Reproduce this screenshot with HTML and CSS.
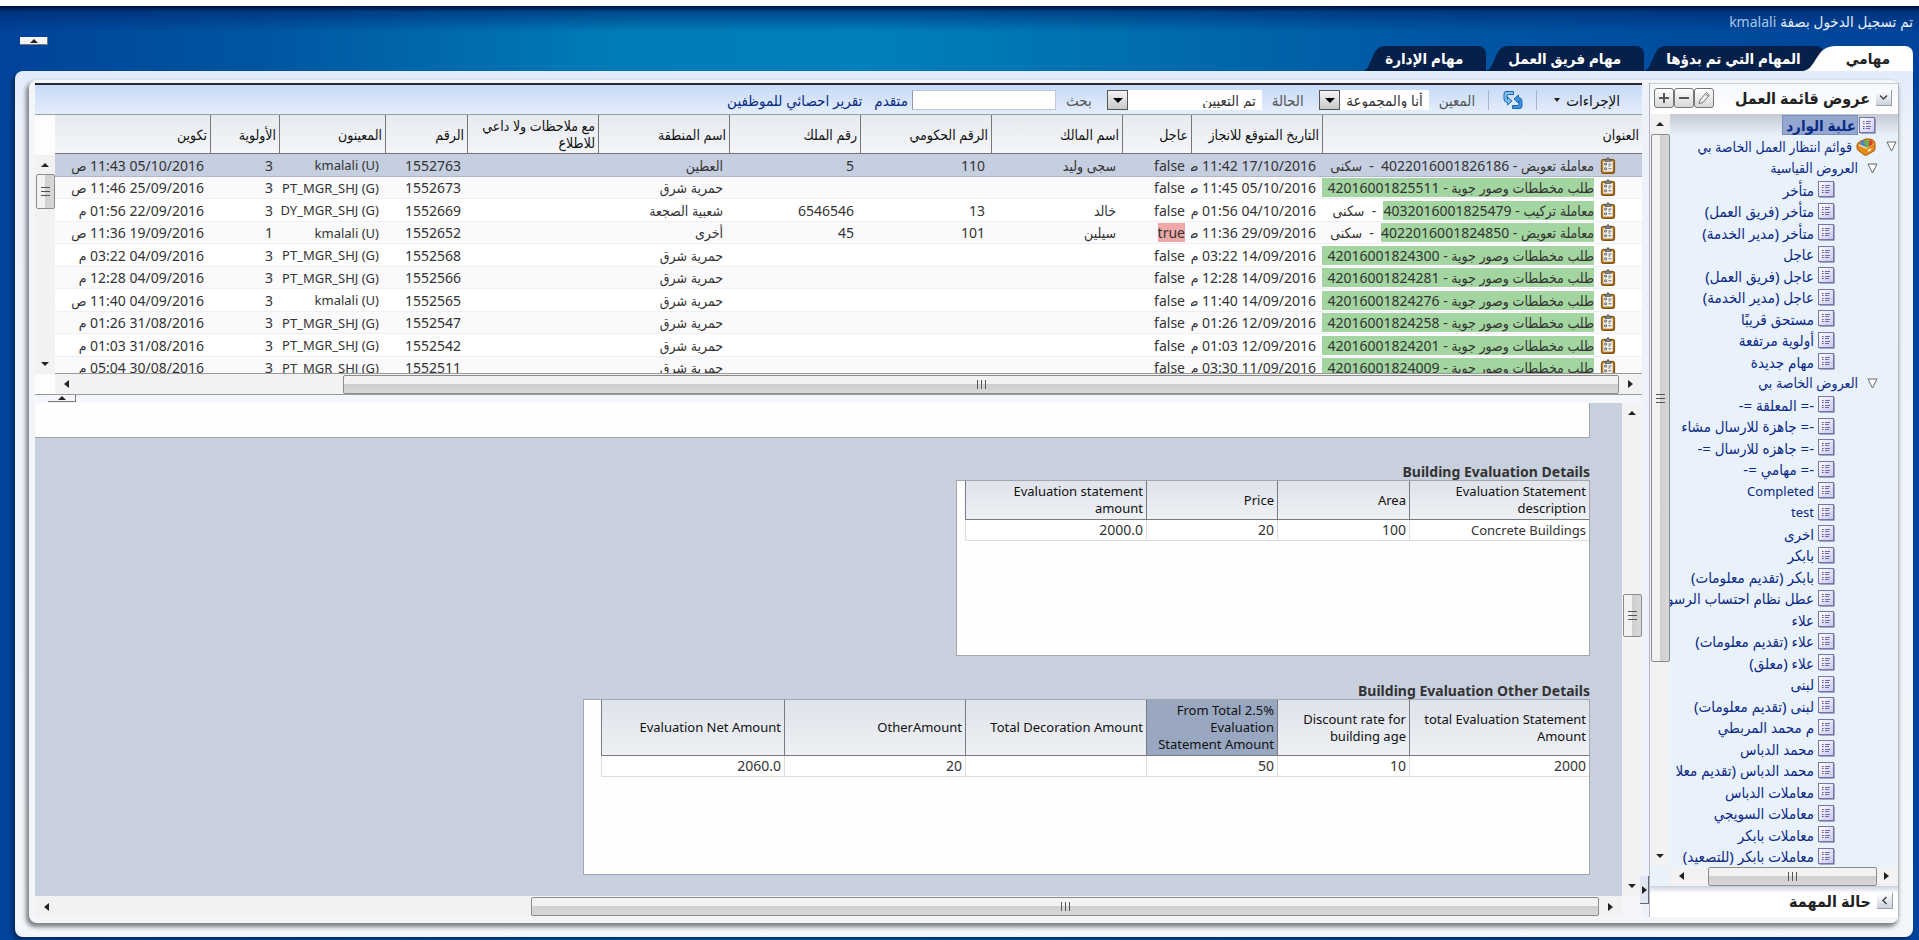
FILE: index.html
```html
<!DOCTYPE html>
<html lang="ar" dir="rtl">
<head>
<meta charset="utf-8">
<title>مهامي</title>
<link rel="stylesheet" href="styles.css">
</head>
<body>
<svg class="sprite" aria-hidden="true">
  <defs>
    <linearGradient id="g-list" x1="0" y1="0" x2="1" y2="1"><stop offset="0" stop-color="#fff"/><stop offset="1" stop-color="#c9c6ee"/></linearGradient>
    <linearGradient id="g-clip" x1="0" y1="0" x2="1" y2="1"><stop offset="0" stop-color="#c98f2e"/><stop offset="1" stop-color="#9a5f0c"/></linearGradient>
    <symbol id="i-list" viewBox="0 0 17 17">
      <rect x="1.5" y="1.5" width="15" height="15" fill="#5c5a8c"/>
      <rect x=".5" y=".5" width="15" height="15" fill="url(#g-list)" stroke="#7775a8"/>
      <path d="M4 4.500h1.500M4 6.500h1.500M4 9.500h1.500M4 11.500h1.500" stroke="#55538c"/>
      <path d="M7 4.500h5M7 6.500h4M7 9.500h5M7 11.500h4" stroke="#6f6da6"/>
    </symbol>
    <symbol id="i-task" viewBox="0 0 16 18">
      <rect x="1" y="2.500" width="14" height="15" rx="2" fill="url(#g-clip)" stroke="#7a4a08"/>
      <rect x="3" y="4.500" width="10" height="11" fill="#f4f4f2"/>
      <path d="M5 4.500V2.500h2L8 .5l1 2h2v2z" fill="#9a9a92" stroke="#4d4d48"/>
      <path d="M4.500 6.500h2v2h-2zM4.500 11.500h2v2h-2z" fill="#fff" stroke="#666"/>
      <path d="M8.500 7.500h3M8.500 12.500h3M8.500 9.500h2" stroke="#555"/>
    </symbol>
    <symbol id="i-open" viewBox="0 0 11 11"><path d="M1 1h9L5.500 10z" fill="#fff" stroke="#666"/></symbol>
    <symbol id="i-slant" viewBox="0 0 33 25" preserveAspectRatio="none"><path d="M33 0C22 0 18 5 13 13 8 21 6 24 0 25h33z" fill="currentColor"/></symbol>
  </defs>
</svg>

<div class="app">
  <header class="top">
    <p class="login">تم تسجيل الدخول بصفة <span class="user">kmalali</span></p>
    <div class="nav">
      <nav class="tabs">
        <button class="tab tab-on"><span class="tab-text">مهامي</span><svg class="slant"><use href="#i-slant"/></svg></button>
        <button class="tab"><span class="tab-text">المهام التي تم بدؤها</span><svg class="slant"><use href="#i-slant"/></svg></button>
        <button class="tab"><span class="tab-text">مهام فريق العمل</span><svg class="slant"><use href="#i-slant"/></svg></button>
        <button class="tab"><span class="tab-text">مهام الإدارة</span><svg class="slant"><use href="#i-slant"/></svg></button>
      </nav>
      <button class="fold" aria-label="طي"><i class="tri up"></i></button>
    </div>
  </header>

  <main class="frame">
    <div class="inner">
      <aside class="side">
        <div class="side-head">
          <button class="disc" aria-label="طي"><svg viewBox="0 0 9 9" width="9" height="9"><path d="M1 2.500 4.500 6 8 2.500" fill="none" stroke="#444" stroke-width="1.500"/></svg></button>
          <h2 class="side-title">عروض قائمة العمل</h2>
          <div class="tools">
            <button class="tool" aria-label="تحرير"><svg viewBox="0 0 14 14" width="14" height="14"><path d="M2 12.500 3 9l6.500-7.500 3 2.500L6 11.500z" fill="#eee" stroke="#777"/><path d="m8.500 3 3 2.500" stroke="#777"/></svg></button>
            <button class="tool" aria-label="حذف"><svg viewBox="0 0 14 14" width="14" height="14"><path d="M2 6h10v2H2z" fill="#555"/></svg></button>
            <button class="tool" aria-label="إضافة"><svg viewBox="0 0 14 14" width="14" height="14"><path d="M2 6h4V2h2v4h4v2H8v4H6V8H2z" fill="#555"/></svg></button>
          </div>
        </div>
        <div class="side-body">
          <div class="tree-col">
            <ul class="tree">
              <li class="node l1 picked"><svg class="ic"><use href="#i-list"/></svg><a href="#">علبة الوارد</a></li>
              <li class="node root"><svg class="op"><use href="#i-open"/></svg><svg class="box" viewBox="0 0 20 19"><path d="M1 8q0-2 4-4 5-3 9-2 5 1 5 5v5q0 2-3 3l-5 3q-2 1-4-1l-4-3q-2-1-2-3z" fill="#e8891c" stroke="#a85a08"/><path d="m2 8 8 4 8-5-6-4z" fill="#f7e2b0"/><path d="m3 7 4-4 3 1v6L7 9z" fill="#4f86c6"/><path d="m8 5 4-3 2 2v5l-4 2z" fill="#6cae4c"/><path d="m13 4 3-1 1 4-4 3z" fill="#d6432e"/><path d="m12 14 3-2" stroke="#fff1cc" stroke-width="2"/></svg><a href="#">قوائم انتظار العمل الخاصة بي</a></li>
              <li class="node group"><svg class="op"><use href="#i-open"/></svg><a href="#">العروض القياسية</a></li>
              <li class="node"><svg class="ic"><use href="#i-list"/></svg><a href="#">متأخر</a></li>
              <li class="node"><svg class="ic"><use href="#i-list"/></svg><a href="#">متأخر (فريق العمل)</a></li>
              <li class="node"><svg class="ic"><use href="#i-list"/></svg><a href="#">متأخر (مدير الخدمة)</a></li>
              <li class="node"><svg class="ic"><use href="#i-list"/></svg><a href="#">عاجل</a></li>
              <li class="node"><svg class="ic"><use href="#i-list"/></svg><a href="#">عاجل (فريق العمل)</a></li>
              <li class="node"><svg class="ic"><use href="#i-list"/></svg><a href="#">عاجل (مدير الخدمة)</a></li>
              <li class="node"><svg class="ic"><use href="#i-list"/></svg><a href="#">مستحق قريبًا</a></li>
              <li class="node"><svg class="ic"><use href="#i-list"/></svg><a href="#">أولوية مرتفعة</a></li>
              <li class="node"><svg class="ic"><use href="#i-list"/></svg><a href="#">مهام جديدة</a></li>
              <li class="node group"><svg class="op"><use href="#i-open"/></svg><a href="#">العروض الخاصة بي</a></li>
              <li class="node"><svg class="ic"><use href="#i-list"/></svg><a href="#">-= المعلقة =-</a></li>
              <li class="node"><svg class="ic"><use href="#i-list"/></svg><a href="#">-= جاهزة للارسال مشاء</a></li>
              <li class="node"><svg class="ic"><use href="#i-list"/></svg><a href="#">-= جاهزه للارسال =-</a></li>
              <li class="node"><svg class="ic"><use href="#i-list"/></svg><a href="#">-= مهامي =-</a></li>
              <li class="node latin"><svg class="ic"><use href="#i-list"/></svg><a href="#">Completed</a></li>
              <li class="node latin"><svg class="ic"><use href="#i-list"/></svg><a href="#">test</a></li>
              <li class="node"><svg class="ic"><use href="#i-list"/></svg><a href="#">اخرى</a></li>
              <li class="node"><svg class="ic"><use href="#i-list"/></svg><a href="#">بابكر</a></li>
              <li class="node"><svg class="ic"><use href="#i-list"/></svg><a href="#">بابكر (تقديم معلومات)</a></li>
              <li class="node"><svg class="ic"><use href="#i-list"/></svg><a href="#">عطل نظام احتساب الرسو</a></li>
              <li class="node"><svg class="ic"><use href="#i-list"/></svg><a href="#">علاء</a></li>
              <li class="node"><svg class="ic"><use href="#i-list"/></svg><a href="#">علاء (تقديم معلومات)</a></li>
              <li class="node"><svg class="ic"><use href="#i-list"/></svg><a href="#">علاء (معلق)</a></li>
              <li class="node"><svg class="ic"><use href="#i-list"/></svg><a href="#">لبنى</a></li>
              <li class="node"><svg class="ic"><use href="#i-list"/></svg><a href="#">لبنى (تقديم معلومات)</a></li>
              <li class="node"><svg class="ic"><use href="#i-list"/></svg><a href="#">م محمد المربطي</a></li>
              <li class="node"><svg class="ic"><use href="#i-list"/></svg><a href="#">محمد الدباس</a></li>
              <li class="node"><svg class="ic"><use href="#i-list"/></svg><a href="#">محمد الدباس (تقديم معلا</a></li>
              <li class="node"><svg class="ic"><use href="#i-list"/></svg><a href="#">معاملات الدباس</a></li>
              <li class="node"><svg class="ic"><use href="#i-list"/></svg><a href="#">معاملات السويجي</a></li>
              <li class="node"><svg class="ic"><use href="#i-list"/></svg><a href="#">معاملات بابكر</a></li>
              <li class="node"><svg class="ic"><use href="#i-list"/></svg><a href="#">معاملات بابكر (للتصعيد)</a></li>
            </ul>
            <div class="sb sb-h"><i class="tri right"></i><span class="thumb side-x"><i class="grip"></i></span><i class="tri left"></i></div>
          </div>
          <div class="sb sb-v"><i class="tri up"></i><span class="thumb side-y"><i class="grip"></i></span><i class="tri down"></i></div>
        </div>
        <div class="side-foot">
          <button class="disc" aria-label="توسيع"><svg viewBox="0 0 9 9" width="9" height="9"><path d="M6.500 1 3 4.500 6.500 8" fill="none" stroke="#444" stroke-width="1.500"/></svg></button>
          <h2 class="side-title">حالة المهمة</h2>
        </div>
      </aside>

      <div class="split-v"><button class="fold-v" aria-label="طي"><i class="tri right"></i></button></div>

      <section class="work">
        <div class="list">
          <div class="bar">
            <button class="menu">الإجراءات <i class="tri down"></i></button>
            <i class="sep"></i>
            <button class="refresh" aria-label="تحديث"><svg viewBox="0 0 20 20" width="20" height="20"><path d="M10.500 4V1.500H3Q1 1.500 1 4v5q0 3 3.500 3.500V15l4.500-4-4.500-4v2.500Q4 9 4 7.500V6Q4 4.500 5.500 4.500h5z" fill="#7cc0f2" stroke="#1c63ae"/><path d="M9.500 16v2.500H17q2 0 2-2.500v-5q0-3-3.500-3.500V5L11 9l4.500 4v-2.500q.5.500.5 2V14q0 1.500-1.500 1.500h-5z" fill="#3d94de" stroke="#1c63ae"/></svg></button>
            <i class="sep"></i>
            <label class="lab" for="who">المعين</label>
            <span class="drop drop-who"><select id="who"><option>أنا والمجموعة</option></select><i class="tri down"></i></span>
            <label class="lab" for="state">الحالة</label>
            <span class="drop drop-state"><select id="state"><option>تم التعيين</option></select><i class="tri down"></i></span>
            <label class="lab" for="find">بحث</label>
            <input class="find" id="find" type="text">
            <a class="link" href="#">متقدم</a>
            <a class="link" href="#">تقرير احصائي للموظفين</a>
          </div>
          <div class="grid-wrap">
            <div class="grid-main">
              <div class="grid-clip">
              <table class="grid">
                <colgroup><col><col class="c131"><col class="c69"><col class="c131"><col class="c131"><col class="c131"><col class="c131"><col class="c131"><col class="c82"><col class="c106"><col class="c69"><col class="c155"></colgroup>
                <thead><tr><th>العنوان</th><th>التاريخ المتوقع للانجاز</th><th>عاجل</th><th>اسم المالك</th><th>الرقم الحكومي</th><th>رقم الملك</th><th>اسم المنطقة</th><th>مع ملاحظات ولا داعي للاطلاع</th><th>الرقم</th><th>المعينون</th><th>الأولوية</th><th>تكوين</th></tr></thead>
                <tbody>
                  <tr class="on"><td class="ttl"><svg><use href="#i-task"/></svg>معاملة تعويض - 4022016001826186 &nbsp;- &nbsp;سكنى</td><td>17/10/2016 11:42 ص</td><td>false</td><td>سجى وليد</td><td>110</td><td>5</td><td>العطين</td><td></td><td>1552763</td><td><bdi dir="ltr">kmalali (U)</bdi></td><td>3</td><td>05/10/2016 11:43 ص</td></tr>
                  <tr><td class="ttl"><svg><use href="#i-task"/></svg><mark class="long">طلب مخططات وصور جوية - 42016001825511</mark></td><td>05/10/2016 11:45 ص</td><td>false</td><td></td><td></td><td></td><td>حمرية شرق</td><td></td><td>1552673</td><td><bdi dir="ltr">PT_MGR_SHJ (G)</bdi></td><td>3</td><td>25/09/2016 11:46 ص</td></tr>
                  <tr><td class="ttl"><svg><use href="#i-task"/></svg><mark>معاملة تركيب - 4032016001825479</mark> &nbsp;- &nbsp;سكنى</td><td>04/10/2016 01:56 م</td><td>false</td><td>خالد</td><td>13</td><td>6546546</td><td>شعبية الصجعة</td><td></td><td>1552669</td><td><bdi dir="ltr">DY_MGR_SHJ (G)</bdi></td><td>3</td><td>22/09/2016 01:56 م</td></tr>
                  <tr><td class="ttl"><svg><use href="#i-task"/></svg><mark>معاملة تعويض - 4022016001824850</mark> &nbsp;- &nbsp;سكنى</td><td>29/09/2016 11:36 ص</td><td><mark class="hot">true</mark></td><td>سيلين</td><td>101</td><td>45</td><td>أخرى</td><td></td><td>1552652</td><td><bdi dir="ltr">kmalali (U)</bdi></td><td>1</td><td>19/09/2016 11:36 ص</td></tr>
                  <tr><td class="ttl"><svg><use href="#i-task"/></svg><mark class="long">طلب مخططات وصور جوية - 42016001824300</mark></td><td>14/09/2016 03:22 م</td><td>false</td><td></td><td></td><td></td><td>حمرية شرق</td><td></td><td>1552568</td><td><bdi dir="ltr">PT_MGR_SHJ (G)</bdi></td><td>3</td><td>04/09/2016 03:22 م</td></tr>
                  <tr><td class="ttl"><svg><use href="#i-task"/></svg><mark class="long">طلب مخططات وصور جوية - 42016001824281</mark></td><td>14/09/2016 12:28 م</td><td>false</td><td></td><td></td><td></td><td>حمرية شرق</td><td></td><td>1552566</td><td><bdi dir="ltr">PT_MGR_SHJ (G)</bdi></td><td>3</td><td>04/09/2016 12:28 م</td></tr>
                  <tr><td class="ttl"><svg><use href="#i-task"/></svg><mark class="long">طلب مخططات وصور جوية - 42016001824276</mark></td><td>14/09/2016 11:40 ص</td><td>false</td><td></td><td></td><td></td><td>حمرية شرق</td><td></td><td>1552565</td><td><bdi dir="ltr">kmalali (U)</bdi></td><td>3</td><td>04/09/2016 11:40 ص</td></tr>
                  <tr><td class="ttl"><svg><use href="#i-task"/></svg><mark class="long">طلب مخططات وصور جوية - 42016001824258</mark></td><td>12/09/2016 01:26 م</td><td>false</td><td></td><td></td><td></td><td>حمرية شرق</td><td></td><td>1552547</td><td><bdi dir="ltr">PT_MGR_SHJ (G)</bdi></td><td>3</td><td>31/08/2016 01:26 م</td></tr>
                  <tr><td class="ttl"><svg><use href="#i-task"/></svg><mark class="long">طلب مخططات وصور جوية - 42016001824201</mark></td><td>12/09/2016 01:03 م</td><td>false</td><td></td><td></td><td></td><td>حمرية شرق</td><td></td><td>1552542</td><td><bdi dir="ltr">PT_MGR_SHJ (G)</bdi></td><td>3</td><td>31/08/2016 01:03 م</td></tr>
                  <tr><td class="ttl"><svg><use href="#i-task"/></svg><mark class="long">طلب مخططات وصور جوية - 42016001824009</mark></td><td>11/09/2016 03:30 م</td><td>false</td><td></td><td></td><td></td><td>حمرية شرق</td><td></td><td>1552511</td><td><bdi dir="ltr">PT_MGR_SHJ (G)</bdi></td><td>3</td><td>30/08/2016 05:04 م</td></tr>
                </tbody>
              </table>
              </div>
              <div class="sb sb-h"><i class="tri right"></i><span class="thumb list-x"><i class="grip"></i></span><i class="tri left"></i></div>
            </div>
            <div class="grid-side">
              <div class="sb sb-v"><i class="tri up"></i><span class="thumb list-y"><i class="grip"></i></span><i class="tri down"></i></div>
            </div>
          </div>
        </div>

        <div class="split-h"><button class="fold" aria-label="طي"><i class="tri up"></i></button></div>

        <div class="detail">
          <div class="detail-main">
            <div class="sb sb-v"><i class="tri up"></i><span class="thumb det-y"><i class="grip"></i></span><i class="tri down"></i></div>
            <div class="doc">
              <div class="sheet sheet-top"></div>
              <h3 class="cap"><bdi>Building Evaluation Details</bdi></h3>
              <div class="sheet sheet-a">
                <table class="mini">
                  <colgroup><col class="w180"><col class="w132"><col class="w131"><col class="w181"></colgroup>
                  <thead><tr><th>Evaluation Statement description</th><th>Area</th><th>Price</th><th>Evaluation statement amount</th></tr></thead>
                  <tbody><tr><td class="latin">Concrete Buildings</td><td>100</td><td>20</td><td>2000.0</td></tr></tbody>
                </table>
              </div>
              <h3 class="cap"><bdi>Building Evaluation Other Details</bdi></h3>
              <div class="sheet sheet-b">
                <table class="mini">
                  <colgroup><col class="w180"><col class="w132"><col class="w131"><col class="w181"><col class="w181"><col class="w183"></colgroup>
                  <thead><tr><th>total Evaluation Statement Amount</th><th>Discount rate for building age</th><th class="sel">From Total 2.5%<br>Evaluation Statement Amount</th><th>Total Decoration Amount</th><th>OtherAmount</th><th>Evaluation Net Amount</th></tr></thead>
                  <tbody><tr><td>2000</td><td>10</td><td>50</td><td></td><td>20</td><td>2060.0</td></tr></tbody>
                </table>
              </div>
            </div>
          </div>
          <div class="sb sb-h det-bar"><i class="tri right"></i><span class="thumb det-x"><i class="grip"></i></span><i class="tri left"></i></div>
        </div>
      </section>
    </div>
  </main>
</div>
</body>
</html>
```
FILE: styles.css
```css
* { box-sizing: border-box; }
body { margin: 0; font: 14px/16px "Noto Sans", "DejaVu Sans Condensed", "DejaVu Sans", sans-serif; color: #333; background: #fff; }
button, input, select { font: inherit; color: inherit; margin: 0; padding: 0; border: 0; background: none; }
a { text-decoration: none; color: #0b2a84; }
h2, h3, p, ul { margin: 0; padding: 0; list-style: none; font-size: inherit; }
.sprite { position: absolute; width: 0; height: 0; }

.app { height: 100vh; display: flex; flex-direction: column; border-top: 6px solid #fff; padding: 0 6px 3px 15px;
  background: linear-gradient(#00123c 0, rgba(0, 40, 110, .6) 6px, rgba(0, 60, 140, 0) 26px), linear-gradient(90deg, #00439a 0, #0056a2 14%, #007cb8 32%, #0080bc 45%, #0070b0 58%, #0057a4 74%, #00439a 100%);
  background-clip: padding-box; }

/* header */
.top { flex: none; display: flex; flex-direction: column; height: 65px; }
.login { height: 40px; padding-top: 7px; color: #e8eef8; line-height: 16px; font-size: 15px; }
.user { color: #a9c6ea; font-size: 14px; }
.nav { display: flex; justify-content: space-between; align-items: flex-end; }
.tabs { display: flex; height: 25px; }
.tab { display: flex; color: #06204e; font-weight: bold; font-size: 15px; cursor: pointer; }
.tab-text { height: 25px; line-height: 24px; padding: 0 23px 0 0; background: #062049; color: #fff; border-radius: 0 8px 0 0; }
.slant { width: 22px; height: 25px; color: #062049; }
.tab-on { position: relative; z-index: 1; margin-left: -21px; }
.tab-on .tab-text { background: #fff; color: #222; padding-left: 10px; }
.tab-on .slant { width: 33px; color: #fff; }
.fold { width: 28px; height: 8px; display: flex; align-items: center; justify-content: center; background: #f4f6fb; border-right: 1px solid #777; border-bottom: 1px solid #777; }
.nav .fold { margin: 0 0 26px 5px; }

/* frame */
.frame { flex: 1; min-height: 0; padding: 9px 14px 14px; border-radius: 8px 0 8px 8px; background: linear-gradient(#e2ebfb, #edf2fa 60px, #f3f6fa); box-shadow: -3px 3px 4px #002a60; }
.inner { height: 100%; display: flex; padding: 3px 0 6px 6px; background: #f3f5f8; border-radius: 8px; box-shadow: -2px 3px 4px 1px #7c7f86; }

/* scrollbars */
.tri { width: 0; height: 0; flex: none; border: 4px solid transparent; }
.tri.up { border-bottom: 4px solid #222; border-top: 0; }
.tri.down { border-top: 4px solid #222; border-bottom: 0; }
.tri.left { border-right: 5px solid #222; border-left: 0; }
.tri.right { border-left: 5px solid #222; border-right: 0; }
.sb { flex: none; display: flex; align-items: center; background: #f2f2f2; }
.sb-h { height: 20px; padding: 0 9px; }
.sb-v { width: 20px; flex-direction: column; padding: 8px 0; }
.thumb { display: flex; align-items: center; justify-content: center; border: 1px solid #8c8c8c; border-radius: 2px; }
.sb-h .thumb { height: 19px; background: linear-gradient(#f2f2f2 45%, #cfcfcf 50%, #d8d8d8); }
.sb-v .thumb { width: 19px; background: linear-gradient(90deg, #f2f2f2 45%, #cfcfcf 50%, #d8d8d8); }
.grip { width: 9px; height: 9px; background: repeating-linear-gradient(90deg, #555 0 1px, transparent 1px 4px); }
.sb-v .grip { background: repeating-linear-gradient(#555 0 1px, transparent 1px 4px); }
.side-x { flex: 168; margin: 0 7px 0 24px; }
.sb-h .tri.left { margin-right: auto; }
.side-y { flex: 524; margin: 8px 0 0; }
.side-y + .tri { margin-top: 192px; }
.list-x { flex: 1; margin: 0 9px 0 274px; }
.list-y { height: 35px; margin-top: 7px; }
.list-y + .tri, .det-y + .tri { margin-top: auto; }
.det-y { height: 43px; margin-top: 179px; }
.det-x { flex: 1; margin: 0 9px 0 482px; }

/* sidebar */
.side { flex: none; width: 250px; display: flex; flex-direction: column; border: solid #b4b8be; border-width: 0 1px; background: #e9f1fb; }
.side-head { flex: none; height: 31px; display: flex; align-items: center; padding: 0 6px 3px 4px; gap: 6px; background: linear-gradient(#f4f7fc, #fff); border-top: 1px solid #ccc; }
.side-title { font-size: 16px; font-weight: bold; color: #222; line-height: 20px; }
.disc { width: 16px; height: 16px; display: flex; align-items: center; justify-content: center; background: linear-gradient(#fff, #ccd2dc); border: solid #9aa0aa; border-width: 0 1px 1px 0; }
.tools { margin-right: auto; display: flex; }
.tool { width: 20px; height: 20px; display: flex; align-items: center; justify-content: center; border: 1px solid #777; border-radius: 3px; background: linear-gradient(#fff, #d8d8d8); }
.side-body { flex: 1; min-height: 0; display: flex; }
.tree-col { flex: 1; min-width: 0; display: flex; flex-direction: column; }
.tree { flex: 1; min-height: 0; overflow: hidden; }
.node { height: 22px; display: flex; align-items: center; gap: 4px; padding-right: 63px; white-space: nowrap; font-size: 15px; }
.node:nth-child(even) { height: 21px; }
.latin { font-size: 13px; }
.node.l1 { padding-right: 22px; gap: 1px; background: linear-gradient(#c4c9d2, #e9f1fb); }
.l1 a { font-weight: bold; background: #93a7d0; border: 1px solid #7a8fbc; line-height: 18px; padding: 0 1px 0 3px; }
.node.root { padding-right: 1px; }
.node.root a { font-size: 14px; }
.node.root .op { margin-left: 6px; }
.node.group { padding-right: 20px; gap: 9px; }
.node.group a { font-size: 14px; }
.ic { flex: none; width: 17px; height: 17px; }
.op { flex: none; width: 11px; height: 11px; }
.box { flex: none; width: 20px; height: 19px; }
.side-body > .sb-v { margin-bottom: 20px; }
.side-foot { flex: none; height: 31px; display: flex; align-items: center; padding: 0 5px 2px; gap: 6px; background: linear-gradient(#c9d0dc, #fff 7px); }
.split-v { flex: none; width: 7px; display: flex; align-items: flex-end; background: #edf2fa; }
.fold-v { position: relative; z-index: 1; width: 9px; height: 28px; margin: 0 0 13px; flex: none; display: flex; align-items: center; justify-content: center; background: #dfe6f2; border: solid #667; border-width: 0 1px 1px 0; }

/* task list */
.work { flex: 1; min-width: 0; display: flex; flex-direction: column; }
.list { flex: none; border-top: 2px solid #26262e; border-bottom: 1px solid #999; }
.bar { height: 29px; display: flex; align-items: center; padding-right: 22px; background: linear-gradient(#c7daf8, #e4eefb); white-space: nowrap; font-size: 15px; }
.menu { display: flex; align-items: center; gap: 6px; color: #111; }
.menu .tri { border-width: 4px 3px 0; }
.sep { width: 1px; height: 20px; background: #aab4c4; margin: 0 14px 0 13px; }
.menu + .sep { margin-right: 17px; }
.refresh { height: 20px; width: 20px; }
.lab { color: #555; margin-left: 10px; }
.drop { display: flex; position: relative; height: 20px; margin-left: 15px; background: #fff; }
.drop select { appearance: none; width: 100%; padding: 0 6px 0 22px; color: #333; }
.drop .tri { position: absolute; left: 0; top: 0; width: 21px; height: 20px; border: 1px solid #555; background: linear-gradient(#f4f4f4, #c8c8c8); }
.drop .tri::after { content: ""; position: absolute; left: 5px; top: 7px; border: 5px solid transparent; border-top-color: #000; border-bottom: 0; }
.drop-who { width: 110px; }
.drop-state { width: 155px; }
.find { width: 144px; height: 20px; background: #fff; border: 1px solid #c0c8d4; border-left-color: #99a; padding: 0 4px; margin-left: 4px; }
.link { margin-left: 12px; }
.grid-wrap { display: flex; border-top: 1px solid #8fa39a; }
.grid-main { flex: 1; min-width: 0; }
.grid-clip { height: 259px; overflow: hidden; border-bottom: 1px solid #999; }
.grid-side { flex: none; width: 20px; padding: 40px 0 20px; display: flex; background: #fdfdfd; }
.grid { width: 100%; table-layout: fixed; border-collapse: separate; border-spacing: 0; }
.grid th { height: 39px; padding: 0 3px 0 2px; font-weight: normal; text-align: right; color: #111; line-height: 17px; background: linear-gradient(#e6e9ef, #f4f6f9); border: solid #777; border-width: 0 0 1px 1px; }
.grid th:last-child { border-left: 0; }
.grid td { height: 22px; padding: 0 6px 0 0; white-space: nowrap; overflow: hidden; line-height: 17px; color: #333; border-bottom: 1px solid #f0f0f4; }
.grid tr:nth-child(odd) td { height: 23px; background: #fff; }
.grid tr:nth-child(even) td { background: #fafafc; }
.grid tr.on td { background: #c6cfe0; border-color: #aeb6c8; }
.grid bdi { font-size: 13px; }
.ttl svg { width: 16px; height: 17px; margin: 0 20px 0 6px; vertical-align: top; }
.c131 { width: 131px; }
.c69 { width: 69px; }
.c82 { width: 82px; }
.c106 { width: 106px; }
.c155 { width: 155px; }
mark { background: #a3d5a0; color: inherit; }
.long { padding-left: 8px; }
.hot { background: #efa9a9; }
.split-h { flex: none; height: 8px; display: flex; justify-content: flex-end; background: #f3f6fb; }
.split-h .fold { height: 7px; margin-left: 13px; }

/* detail */
.detail { flex: 1; min-height: 0; display: flex; flex-direction: column; }
.detail-main { flex: 1; min-height: 0; display: flex; }
.det-bar { height: 21px; margin-right: 20px; }
.doc { flex: 1; min-width: 0; overflow: hidden; padding-right: 32px; background: #c8d0dd; color: #333; }
.sheet { background: #fefefe; border: 1px solid #a2a6ae; }
.sheet-top { height: 35px; border-width: 0 1px 1px 0; margin-bottom: 25px; }
.cap { font-weight: bold; line-height: 17px; font-size: 14px; }
.sheet-a { width: 634px; height: 176px; margin-bottom: 26px; }
.sheet-b { width: 1007px; height: 176px; }
.mini { table-layout: fixed; border-collapse: separate; border-spacing: 0; width: min-content; }
.w180 { width: 180px; }
.w181 { width: 181px; }
.w132 { width: 132px; }
.w131 { width: 131px; }
.w183 { width: 183px; }
.mini th { height: 38px; padding: 2px 3px; font-weight: normal; font-size: 13px; text-align: right; color: #111; line-height: 17px; background: linear-gradient(#dfe3ea, #eef0f4); border: solid #777c84; border-width: 0 0 1px 1px; }
.mini th.sel { background: #99a7c0; }
.mini td { height: 21px; padding: 0 3px; border: solid #ddd; border-width: 0 0 1px 1px; background: #fff; }
```
